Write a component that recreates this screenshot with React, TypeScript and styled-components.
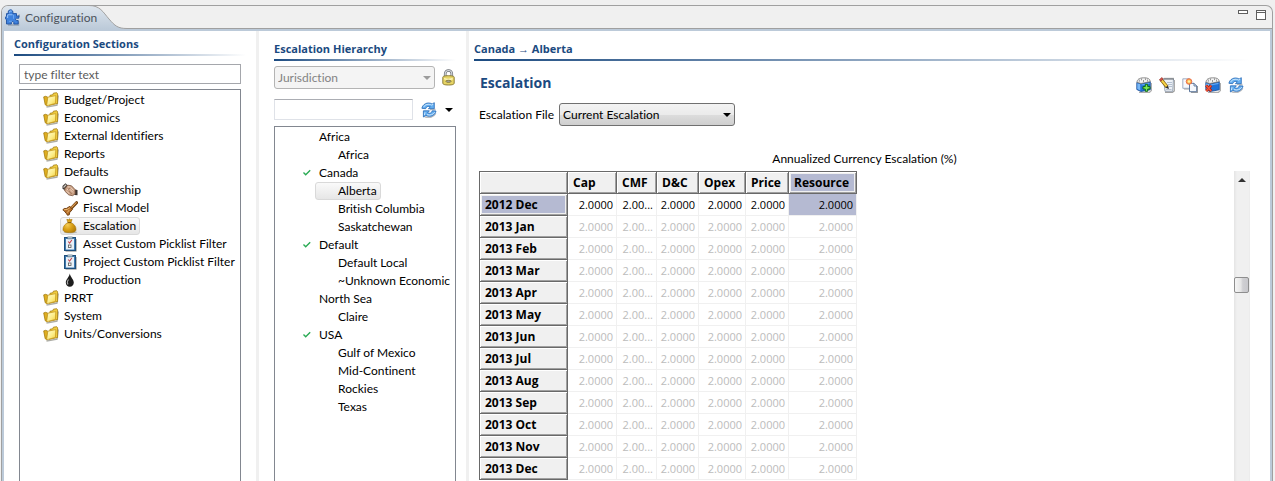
import React from "react";
import styled, { createGlobalStyle, css } from "styled-components";

const navy = "#1b4a80";
const frameBlue = "#bccad9";
const headingFont = `"Open Sans", "Noto Sans", sans-serif`;

const GlobalStyle = createGlobalStyle`
  *, *::before, *::after { box-sizing: border-box; }
  html, body { margin: 0; padding: 0; }
  body {
    background: #f0f0f0;
    color: #000;
    font-family: Lato, "Open Sans", sans-serif;
    font-size: 12px;
    line-height: 18px;
    font-variant-ligatures: none;
    overflow: hidden;
  }
  button, input, select { font: inherit; color: inherit; margin: 0; }
  svg { display: block; flex: none; }
`;

/* ---------- window frame ---------- */

const Page = styled.div`
  display: flex;
  flex-direction: column;
  min-height: 100vh;
  padding: 5px 2px 0 1px;
`;

const Frame = styled.div`
  flex: 1;
  display: flex;
  flex-direction: column;
  border: 1px solid #a0a0a0;
  border-bottom: 0;
  border-radius: 7px 7px 0 0;
  overflow: hidden;
`;

const TabBar = styled.header`
  display: flex;
  height: 23px;
`;

const Tab = styled.div`
  position: relative;
  width: 128px;
  flex: none;
`;

const TabShape = styled.svg`
  position: absolute;
  inset: 0;
`;

const TabLabel = styled.button`
  position: relative;
  display: flex;
  align-items: center;
  gap: 5px;
  height: 23px;
  padding: 0 0 0 3px;
  border: 0;
  background: none;
  color: #4c535c;
`;

const TabRest = styled.div`
  flex: 1;
  display: flex;
  justify-content: flex-end;
  align-items: flex-start;
  gap: 8px;
  padding: 4px 6px 0 0;
  border-bottom: 1px solid #a0a0a0;
`;

const IconButton = styled.button`
  display: flex;
  align-items: center;
  padding: 0;
  border: 0;
  background: none;
`;

const Body = styled.main`
  flex: 1;
  display: flex;
  background: #fff;
  border: 2px solid ${frameBlue};
  border-bottom: 0;
`;

const Panel = styled.section<{ $width?: number }>`
  display: flex;
  flex-direction: column;
  min-width: 0;
  ${(p) => (p.$width ? css`flex: 0 0 ${p.$width}px;` : css`flex: 1;`)}
`;

const SectionsPanel = styled(Panel)`
  padding: 3px 10px 0 10px;
  border-right: 3px solid #f0f0f0;
`;

const HierarchyPanel = styled(Panel)`
  padding: 8px 10px 0 15px;
  border-right: 3px solid #f0f0f0;
`;

const DetailPanel = styled(Panel)`
  padding: 8px 20px 0 5px;
`;

const PanelTitle = styled.h2`
  margin: 0;
  color: ${navy};
  font-family: ${headingFont};
  font-size: 11px;
  font-weight: 700;
  line-height: 20px;
  white-space: nowrap;

  &::after {
    content: "";
    display: block;
    height: 2px;
    background: linear-gradient(to right, ${navy}, #fff);
  }
`;

/* ---------- form controls ---------- */

const TextBox = styled.input<{ $soft?: boolean }>`
  width: 100%;
  min-width: 0;
  height: 20px;
  padding: 0 4px;
  border: 1px solid ${(p) => (p.$soft ? "#dfe2e8" : "#a5a7ac")};
  background: #fff;
  outline: none;
  ${(p) => p.$soft && css`height: 21px; border-top-color: #abadb3; flex: 1;`}
  &::placeholder { color: #5c5c5c; opacity: 1; }
`;

const SelectWrap = styled.div<{ $wide?: boolean }>`
  position: relative;
  ${(p) => (p.$wide ? css`flex: 1;` : css`width: 176px;`)}
  svg {
    position: absolute;
    right: 4px;
    top: 10px;
    pointer-events: none;
  }
`;

const Select = styled.select`
  display: block;
  appearance: none;
  width: 100%;
  height: 23px;
  padding: 0 3px;
  border: 1px solid #707070;
  border-radius: 3px;
  background: linear-gradient(#f3f3f3, #ebebeb 50%, #dddddd 50%, #cfcfcf);
  color: #000;
  &:disabled {
    border-color: #b4b4b4;
    background: #f4f4f4;
    color: #838383;
    opacity: 1;
  }
`;

const ControlRow = styled.div`
  display: flex;
  align-items: center;
`;

const LockRow = styled(ControlRow)`
  gap: 7px;
  margin-top: 5px;
  padding-right: 1px;
`;

const SearchRow = styled(ControlRow)`
  gap: 8px;
  margin-top: 10px;
  padding-right: 3px;
`;

const FileRow = styled(ControlRow)`
  gap: 5px;
  margin: 10px 0 23px 5px;
`;

/* ---------- trees ---------- */

const SectionsBody = styled.div`
  flex: 1;
  display: flex;
  flex-direction: column;
  gap: 5px;
  margin: 8px 5px 0 5px;
`;

const Tree = styled.ul`
  flex: 1;
  margin: 0;
  padding: 1px 0 0;
  list-style: none;
  border: 1px solid #828790;
  border-bottom: 0;
  overflow: hidden;
`;

const HierarchyTree = styled(Tree)`
  margin-top: 6px;
`;

const TreeRow = styled.li<{ $child?: boolean }>`
  display: flex;
  padding-left: ${(p) => (p.$child ? 40 : 21)}px;
`;

const TreeItem = styled.button<{ $selected?: boolean }>`
  display: flex;
  align-items: center;
  gap: 5px;
  height: 18px;
  padding: 0 3px 0 1px;
  border: 1px solid transparent;
  border-radius: 3px;
  background: none;
  white-space: nowrap;
  ${(p) =>
    p.$selected &&
    css`
      border-color: #d9d9d9;
      background: linear-gradient(#fafafa, #e6e6e6);
    `}
`;

const CheckSlot = styled.span`
  width: 16px;
  flex: none;
`;

/* ---------- detail ---------- */

const HeadingRow = styled.div`
  display: flex;
  align-items: center;
  justify-content: space-between;
  height: 20px;
  margin-top: 12px;
  padding: 0 6px;
`;

const Heading = styled.h1`
  margin: 0;
  color: ${navy};
  font-family: ${headingFont};
  font-size: 14px;
  line-height: 20px;
`;

const Toolbar = styled.div`
  display: flex;
  gap: 7px;
  padding-top: 3px;
`;

const GridTitle = styled.div`
  margin: 0 0 2px 5px;
  line-height: 20px;
  text-align: center;
`;

const GridArea = styled.div`
  flex: 1;
  display: flex;
  justify-content: space-between;
  align-items: stretch;
  margin-left: 5px;
`;

const Grid = styled.table`
  align-self: flex-start;
  table-layout: fixed;
  width: 378px;
  border-collapse: separate;
  border-spacing: 0;
  border-top: 1px solid #696969;
  border-left: 1px solid #696969;
  font-family: ${headingFont};
`;

const HeadCell = styled.th<{ $selected?: boolean }>`
  height: 22px;
  padding: 0 5px;
  border-right: 1px solid #696969;
  border-bottom: 1px solid #696969;
  background: ${(p) => (p.$selected ? "#b5bad2" : "#f0f0f0")};
  box-shadow: ${(p) =>
    p.$selected
      ? "inset 1px 1px #fff, inset -1px -1px #a0a0a0, inset 2px 2px #f0f0f0, inset -2px -2px #f0f0f0"
      : "inset 1px 1px #fff, inset -1px -1px #a0a0a0"};
  font-size: 12px;
  font-weight: 700;
  text-align: left;
  line-height: 18px;
  white-space: nowrap;
`;

const Cell = styled.td<{ $muted?: boolean; $selected?: boolean }>`
  height: 22px;
  padding: 1px 3px 0 2px;
  border-right: 1px solid #f0f0f0;
  border-bottom: 1px solid #f0f0f0;
  background: ${(p) => (p.$selected ? "#b5bad2" : "#fff")};
  color: ${(p) => (p.$muted ? "#bcbcbc" : "#000")};
  font-size: 11px;
  text-align: right;
  line-height: 18px;
  white-space: nowrap;
`;

const ScrollBar = styled.div`
  display: flex;
  flex-direction: column;
  align-items: center;
  width: 16px;
  background: linear-gradient(to right, #e4e4e4, #f0f0f0 3px, #f0f0f0 15px, #e8e8e8);
`;

const ScrollUp = styled(IconButton)`
  justify-content: center;
  width: 16px;
  height: 17px;
`;

const ScrollTrack = styled.div`
  flex: 1;
  width: 100%;
  padding-top: 89px;
`;

const ScrollThumb = styled.div`
  width: 15px;
  height: 16px;
  border: 1px solid #8e8e8e;
  border-radius: 2px;
  background: linear-gradient(to right, #f5f5f5, #e6e6e6 45%, #cfcfd2 60%, #c8c8cc);
`;

/* ---------- icons ---------- */

const PuzzleIcon = () => (
  <svg width="15" height="17" viewBox="0 0 15 17">
    <path d="M3 16h10.500v-3.500M14.300 8V5.500" fill="none" stroke="#7f8fa3" strokeWidth="1.400" opacity=".7" />
    <path
      d="M3.500 4.600C2.600 2.600 3.700.8 5.500.8s3 1.800 2.200 3.800h3.800v2.600l2.300-.4v2.400H11.300c-.9.300-.9 1.900 0 2.300h1.900V15H8.800v-1.700c-.5-1-2-1-2.400 0V15H1.500v-4.300C.2 10.700.1 7.300 1.500 7.200V4.600z"
      fill="#3f82dd" stroke="#1f509f" strokeWidth=".9"
    />
    <path d="M4.600 3.500c-.2-1.600 1.600-2 1.800-.9M2.700 5.800h4.800M2.600 6v3" fill="none" stroke="#93c0f6" strokeWidth="1.100" />
    <path d="M8.500 5.800v4M4 12.300h3" fill="none" stroke="#6aa5ef" strokeWidth="1" />
  </svg>
);

const FolderIcon = () => (
  <svg width="16" height="16" viewBox="0 0 16 16">
    <defs>
      <linearGradient id="folderFront" x1="0" y1="0" x2="1" y2="1">
        <stop offset="0" stopColor="#fffcd6" />
        <stop offset=".55" stopColor="#fdee8a" />
        <stop offset="1" stopColor="#f0cb3c" />
      </linearGradient>
    </defs>
    <path d="M3.500 15l10.500-1.900 1.300-9.600" fill="none" stroke="#77776a" strokeWidth="1.300" opacity=".6" />
    <path d="M7 3.300L9.800 2.700l.6-1.500 3.300-.5.9 1.100v9.700L6 13.300z" fill="#f0cd40" stroke="#a17a0c" strokeWidth=".8" />
    <path d="M.7 4.900l1.900-.6 2.200.9-.9 8.500-1.700-1z" fill="#dfae1f" stroke="#a17a0c" strokeWidth=".8" />
    <path d="M4.800 5.200l8-1.600-.3 7.800-8.900 2.400z" fill="url(#folderFront)" stroke="#c79b20" strokeWidth=".8" />
  </svg>
);

const HandshakeIcon = () => (
  <svg width="16" height="16" viewBox="0 0 16 16">
    <path d="M.5 4L3.500 1.200 6 3.500 2.500 8 .5 6.800z" fill="#3c3733" />
    <path d="M1.500 5.500L4.200 2.600" stroke="#d5cdc5" strokeWidth="1.200" />
    <path d="M12.800 7.500l2.700.6v5.200l-2.900-.2z" fill="#3c3430" />
    <path d="M3 6.500L5.800 3.200l3.700.6 3.500 3.700.1 4.500-2.600 1.700-3.700-.8L2.700 9z" fill="#c9a084" stroke="#75513b" strokeWidth=".8" />
    <path d="M5.500 4.800l3 .4 3 3.300M5 7l3.500 3.500M4.300 9l3.200 2.800M8 7.300l3 3.200" fill="none" stroke="#f0d6c3" strokeWidth=".9" />
    <path d="M6.500 8.500l3 3.300M8 5.500L6.300 7.600" stroke="#84583e" strokeWidth=".7" />
  </svg>
);

const GavelIcon = () => (
  <svg width="16" height="16" viewBox="0 0 16 16">
    <path d="M8 9.500l6.500-6.800" stroke="#6e3d0d" strokeWidth="3" strokeLinecap="round" />
    <path d="M8 9l6.200-6.300" stroke="#d99b52" strokeWidth="1.200" strokeLinecap="round" />
    <path d="M.8 9.800l1.400-1.200 2.300-.2 3.300-2.100 2.700 3-2.800 3.300-.4 2.200-1.800.5-1-1.600L2.300 11z" fill="#b66f29" stroke="#6b390b" strokeWidth=".9" />
    <path d="M2.200 9.700l2.900-.2 2.700-1.700M5.200 12.700L7.300 10" stroke="#eab873" strokeWidth="1" fill="none" />
  </svg>
);

const MoneyBagIcon = () => (
  <svg width="16" height="16" viewBox="0 0 16 16">
    <defs>
      <radialGradient id="bag" cx=".35" cy=".45" r=".7">
        <stop offset="0" stopColor="#f4cc55" />
        <stop offset=".5" stopColor="#d9a016" />
        <stop offset="1" stopColor="#b27b06" />
      </radialGradient>
    </defs>
    <ellipse cx="8.500" cy="14.200" rx="6.500" ry="1.300" fill="#8a8a80" opacity=".5" />
    <path d="M4.800 1.300l1.700.4L7.500.8l1.200.9 1.400-.3-1.200 3.300c3 .9 5.300 3.800 5.100 7-.2 2-2.300 2.800-6.500 2.800s-6.200-.8-6.500-2.800C.8 8.500 3.300 5.500 6 4.700z" fill="url(#bag)" stroke="#a87509" strokeWidth=".6" />
    <path d="M5.800 4.600h3.400" stroke="#825904" strokeWidth="1" />
  </svg>
);

const ClipboardIcon = () => (
  <svg width="16" height="16" viewBox="0 0 16 16">
    <path d="M3.500 15.300h10.800V3" fill="none" stroke="#8a8a8a" strokeWidth="1" opacity=".7" />
    <rect x="2.500" y="1.500" width="11" height="13" fill="#3e7ab0" stroke="#1f4f7c" />
    <rect x="4" y="3" width="8" height="10.500" fill="#e9f1f8" />
    <path d="M5.500 1h5v1.800h-5z" fill="#dfe6ec" stroke="#49677f" strokeWidth=".7" />
    <path d="M6.200 5.500l1.400 1.600L9.800 4" fill="none" stroke="#c8434c" strokeWidth="1.100" />
    <rect x="6.500" y="9" width="2.500" height="2.500" fill="#fff" stroke="#555" strokeWidth=".8" />
  </svg>
);

const DropIcon = () => (
  <svg width="16" height="16" viewBox="0 0 16 16">
    <path d="M7.800 1.500C7.300 4.800 3.800 7.600 3.800 10.600c0 2.500 1.700 4.200 4 4.200s4-1.700 4-4.200C11.800 7.600 8.300 4.800 7.800 1.500z" fill="#1d1d1d" />
    <path d="M6.500 7.500c-1.500 1.900-1.400 3.700-.5 5" fill="none" stroke="#a8a8a8" strokeWidth="1.100" />
  </svg>
);

const CheckIcon = () => (
  <svg width="16" height="16" viewBox="0 0 16 16">
    <path d="M5.500 7.500l2.200 2.200L12.200 5.200" fill="none" stroke="#2bab55" strokeWidth="1.400" />
  </svg>
);

const RefreshIcon = () => (
  <svg width="16" height="16" viewBox="0 0 16 16">
    <path d="M3.500 14.700c4 1.600 9 .9 11.300-3.200M9 7.500h5.500" fill="none" stroke="#8a8f96" strokeWidth="1.400" opacity=".6" />
    <path d="M.9 6.300C1.500 2.500 6.300-.7 11.200 2L13.300.7v6H7.400l1.900-1.800C7.300 3.800 5.300 4.500 4.600 6.700z" fill="#64aef0" stroke="#2468b6" strokeWidth=".8" strokeLinejoin="round" />
    <path d="M15 9c-.6 3.900-5.200 6.900-10.200 4.400L2.400 15V8.800h6L6.600 10.800c2 1.100 4 .3 4.700-2z" fill="#64aef0" stroke="#2468b6" strokeWidth=".8" strokeLinejoin="round" />
    <path d="M2.500 5.200C4 2.400 7.500 1.400 10.700 3.100l1.500-.8M4 10.300l-.6 2.800M6 12.600c3 1.100 6.300 0 7.700-2.400" fill="none" stroke="#cfe8fc" strokeWidth="1" />
  </svg>
);

const LockIcon = () => (
  <svg width="13" height="17" viewBox="0 0 13 17">
    <path d="M3.200 8V4.800a3.300 3.300 0 0 1 6.600 0V8" fill="none" stroke="#6c7077" strokeWidth="2.600" />
    <path d="M3.200 8V4.800a3.300 3.300 0 0 1 6.600 0V8" fill="none" stroke="#d6dade" strokeWidth="1.200" />
    <path d="M.8 8.300c0-1 1.500-1.600 5.700-1.600s5.700.6 5.700 1.600v5.900c0 1-1.500 1.800-5.700 1.800S.8 15.200.8 14.200z" fill="#e6d465" stroke="#85752c" strokeWidth=".9" />
    <path d="M2 9.700c2 .7 6 .7 8.700 0" fill="none" stroke="#fff8bd" strokeWidth="1.400" />
    <ellipse cx="6.500" cy="12.300" rx="2.600" ry="1.100" fill="#a8a698" stroke="#6d6428" strokeWidth=".7" />
  </svg>
);

const Arrow = ({ color = "#000" }: { color?: string }) => (
  <svg width="8" height="4" viewBox="0 0 8 4">
    <path d="M0 0h8L4 4z" fill={color} />
  </svg>
);

const Database = () => (
  <>
    <path d="M3 15.300h10.500l2-1.800V6" fill="none" stroke="#777" strokeWidth="1.200" opacity=".6" />
    <path d="M.8 5.500l4 1.300 9.500-2v8L5 14.500.8 12.500z" fill="#1f72d8" stroke="#174a94" strokeWidth=".8" />
    <path d="M1.300 6.300l3 1v6.200l-3-1.400z" fill="#79b8f6" />
    <path d="M5.500 8l8-1.700" stroke="#63a8f2" strokeWidth="1.200" />
    <path d="M1 5.300C1.200 2.500 3 1 7.500.8 11.500.7 14 1.500 14.300 4.600L5 6.500z" fill="#f2f2f2" stroke="#747474" strokeWidth=".8" />
    <path d="M3.300 2.500v2.200M5.500 1.500v1.800M7.500 3v2M9.500 1.300v1.800M11.500 2.500v2" stroke="#8d8d8d" strokeWidth=".9" />
  </>
);

const DatabaseAddIcon = () => (
  <svg width="16" height="16" viewBox="0 0 16 16">
    <Database />
    <path d="M9.300 7.300h2.400v2.300H14V12h-2.300v2.300H9.300V12H7V9.600h2.300z" fill="#7be858" stroke="#0d6b14" strokeWidth="1" />
  </svg>
);

const DatabaseDeleteIcon = () => (
  <svg width="16" height="16" viewBox="0 0 16 16">
    <Database />
    <path d="M1.200 8.500l5 5.500M6.200 8.500l-5 5.500" stroke="#a51e0c" strokeWidth="2.800" />
    <path d="M1.200 8.500l5 5.500M6.200 8.500l-5 5.500" stroke="#f2543a" strokeWidth="1.500" />
  </svg>
);

const EditIcon = () => (
  <svg width="16" height="16" viewBox="0 0 16 16">
    <path d="M6 15.300h7.500L15.300 14V3" fill="none" stroke="#777" strokeWidth="1.200" opacity=".7" />
    <path d="M4.500 1.800h10l-.8 12.500H6z" fill="#edf1f6" stroke="#8392a5" strokeWidth=".8" />
    <path d="M6 .8v2M8 .8v2M10 .8v2M12 .8v2M14 .8v2" stroke="#555" strokeWidth=".9" />
    <path d="M8 5.500h5M9 7.500h4M10 9.500h3M7 12.500h5.500" stroke="#a4b4c8" strokeWidth=".8" />
    <path d="M2 2.500l6 7.300" stroke="#7f5a08" strokeWidth="3.400" />
    <path d="M2.300 2.800l5.400 6.600" stroke="#f9d548" strokeWidth="2" />
    <path d="M.4 2.600L3 .5l1.200 1.500-2.500 2.200z" fill="#d9534a" stroke="#8b2a24" strokeWidth=".6" />
    <path d="M6.600 10.700l2.500-2.100.8 3.500z" fill="#2b2b2b" />
  </svg>
);

const CopyIcon = () => (
  <svg width="16" height="16" viewBox="0 0 16 16">
    <path d="M2 12h5M9 15.500h6.500V9" fill="none" stroke="#777" strokeWidth="1.100" opacity=".7" />
    <path d="M.8 1.800h6.700l1.700 1.800v7.700H.8z" fill="#f6f9fd" stroke="#8a9bb4" strokeWidth=".8" />
    <path d="M7.500 6.300h4.500l2.700 2.700v5.700H7.500z" fill="#f6f9fd" stroke="#4b6890" strokeWidth=".9" />
    <path d="M12 6.300v2.700h2.700" fill="none" stroke="#4b6890" strokeWidth=".8" />
    <circle cx="7" cy="4.500" r="2.800" fill="#f9ad49" stroke="#e8694a" strokeWidth=".9" />
    <circle cx="7" cy="4.500" r="1.300" fill="#fff2a0" />
  </svg>
);

const MinimizeIcon = () => (
  <svg width="10" height="10" viewBox="0 0 10 10">
    <rect x=".5" y=".5" width="9" height="3" fill="#fff" stroke="#5f5f5f" />
  </svg>
);

const MaximizeIcon = () => (
  <svg width="10" height="10" viewBox="0 0 10 10">
    <rect x=".5" y=".5" width="9" height="9" fill="#fff" stroke="#5f5f5f" />
    <path d="M0 2.500h10" stroke="#5f5f5f" />
  </svg>
);

/* ---------- data ---------- */

type Section = { label: string; icon: () => React.JSX.Element; child?: boolean; selected?: boolean };

const sections: Section[] = [
  { label: "Budget/Project", icon: FolderIcon },
  { label: "Economics", icon: FolderIcon },
  { label: "External Identifiers", icon: FolderIcon },
  { label: "Reports", icon: FolderIcon },
  { label: "Defaults", icon: FolderIcon },
  { label: "Ownership", icon: HandshakeIcon, child: true },
  { label: "Fiscal Model", icon: GavelIcon, child: true },
  { label: "Escalation", icon: MoneyBagIcon, child: true, selected: true },
  { label: "Asset Custom Picklist Filter", icon: ClipboardIcon, child: true },
  { label: "Project Custom Picklist Filter", icon: ClipboardIcon, child: true },
  { label: "Production", icon: DropIcon, child: true },
  { label: "PRRT", icon: FolderIcon },
  { label: "System", icon: FolderIcon },
  { label: "Units/Conversions", icon: FolderIcon },
];

type Place = { label: string; checked?: boolean; child?: boolean; selected?: boolean };

const places: Place[] = [
  { label: "Africa" },
  { label: "Africa", child: true },
  { label: "Canada", checked: true },
  { label: "Alberta", child: true, selected: true },
  { label: "British Columbia", child: true },
  { label: "Saskatchewan", child: true },
  { label: "Default", checked: true },
  { label: "Default Local", child: true },
  { label: "~Unknown Economic", child: true },
  { label: "North Sea" },
  { label: "Claire", child: true },
  { label: "USA", checked: true },
  { label: "Gulf of Mexico", child: true },
  { label: "Mid-Continent", child: true },
  { label: "Rockies", child: true },
  { label: "Texas", child: true },
];

const columns = [
  { label: "Cap", width: 49, value: "2.0000" },
  { label: "CMF", width: 40, value: "2.00..." },
  { label: "D&C", width: 42, value: "2.0000" },
  { label: "Opex", width: 47, value: "2.0000" },
  { label: "Price", width: 43, value: "2.0000" },
  { label: "Resource", width: 68, value: "2.0000" },
];

const months = [
  "2012 Dec", "2013 Jan", "2013 Feb", "2013 Mar", "2013 Apr", "2013 May", "2013 Jun",
  "2013 Jul", "2013 Aug", "2013 Sep", "2013 Oct", "2013 Nov", "2013 Dec",
];

const tools = [
  { label: "Add", icon: DatabaseAddIcon },
  { label: "Edit", icon: EditIcon },
  { label: "Copy", icon: CopyIcon },
  { label: "Delete", icon: DatabaseDeleteIcon },
  { label: "Refresh", icon: RefreshIcon },
];

/* ---------- app ---------- */

export default function App() {
  return (
    <Page>
      <GlobalStyle />
      <Frame>
        <TabBar>
          <Tab>
            <TabShape width="128" height="23" viewBox="0 0 128 23">
              <defs>
                <linearGradient id="tabFill" x1="0" y1="0" x2="0" y2="1">
                  <stop offset="0" stopColor="#dde5ed" />
                  <stop offset="1" stopColor={frameBlue} />
                </linearGradient>
              </defs>
              <path d="M0 0H88C98 0 101 6 107 13C113 20 116 22.500 125 22.500H128V23H0z" fill="url(#tabFill)" />
              <path d="M87 -.5C98 -.5 101 6 107 13C113 20 116 22.500 125 22.500H128" fill="none" stroke="#a0a0a0" />
            </TabShape>
            <TabLabel>
              <PuzzleIcon />
              Configuration
            </TabLabel>
          </Tab>
          <TabRest>
            <IconButton aria-label="Minimize"><MinimizeIcon /></IconButton>
            <IconButton aria-label="Maximize"><MaximizeIcon /></IconButton>
          </TabRest>
        </TabBar>
        <Body>
          <SectionsPanel $width={255}>
            <PanelTitle>Configuration Sections</PanelTitle>
            <SectionsBody>
              <TextBox aria-label="Filter sections" placeholder="type filter text" />
              <Tree>
                {sections.map(({ label, icon: Icon, child, selected }) => (
                  <TreeRow key={label} $child={child}>
                    <TreeItem $selected={selected}>
                      <Icon />
                      {label}
                    </TreeItem>
                  </TreeRow>
                ))}
              </Tree>
            </SectionsBody>
          </SectionsPanel>

          <HierarchyPanel $width={210}>
            <PanelTitle>Escalation Hierarchy</PanelTitle>
            <LockRow>
              <SelectWrap $wide>
                <Select aria-label="Hierarchy level" disabled>
                  <option>Jurisdiction</option>
                </Select>
                <Arrow color="#9c9c9c" />
              </SelectWrap>
              <IconButton aria-label="Lock"><LockIcon /></IconButton>
            </LockRow>
            <SearchRow>
              <TextBox $soft aria-label="Search hierarchy" />
              <IconButton aria-label="Refresh hierarchy"><RefreshIcon /></IconButton>
              <IconButton aria-label="Refresh options"><Arrow /></IconButton>
            </SearchRow>
            <HierarchyTree>
              {places.map(({ label, checked, child, selected }, i) => (
                <TreeRow key={i} $child={child}>
                  <TreeItem $selected={selected}>
                    <CheckSlot>{checked && <CheckIcon />}</CheckSlot>
                    {label}
                  </TreeItem>
                </TreeRow>
              ))}
            </HierarchyTree>
          </HierarchyPanel>

          <DetailPanel>
            <PanelTitle>Canada → Alberta</PanelTitle>
            <HeadingRow>
              <Heading>Escalation</Heading>
              <Toolbar>
                {tools.map(({ label, icon: Icon }) => (
                  <IconButton key={label} aria-label={label}><Icon /></IconButton>
                ))}
              </Toolbar>
            </HeadingRow>
            <FileRow>
              <label htmlFor="escalation-file">Escalation File</label>
              <SelectWrap>
                <Select id="escalation-file">
                  <option>Current Escalation</option>
                </Select>
                <Arrow />
              </SelectWrap>
            </FileRow>
            <GridTitle id="grid-title">Annualized Currency Escalation (%)</GridTitle>
            <GridArea>
              <Grid aria-labelledby="grid-title">
                <colgroup>
                  <col width={88} />
                  {columns.map((c) => <col key={c.label} width={c.width} />)}
                </colgroup>
                <thead>
                  <tr>
                    <HeadCell />
                    {columns.map((c) => (
                      <HeadCell key={c.label} scope="col" $selected={c.label === "Resource"}>{c.label}</HeadCell>
                    ))}
                  </tr>
                </thead>
                <tbody>
                  {months.map((month, row) => (
                    <tr key={month}>
                      <HeadCell scope="row" $selected={row === 0}>{month}</HeadCell>
                      {columns.map((c) => (
                        <Cell key={c.label} $muted={row > 0} $selected={row === 0 && c.label === "Resource"}>
                          {c.value}
                        </Cell>
                      ))}
                    </tr>
                  ))}
                </tbody>
              </Grid>
              <ScrollBar>
                <ScrollUp aria-label="Scroll up">
                  <svg width="8" height="4" viewBox="0 0 8 4"><path d="M4 0l4 4H0z" fill="#333" /></svg>
                </ScrollUp>
                <ScrollTrack><ScrollThumb /></ScrollTrack>
              </ScrollBar>
            </GridArea>
          </DetailPanel>
        </Body>
      </Frame>
    </Page>
  );
}
